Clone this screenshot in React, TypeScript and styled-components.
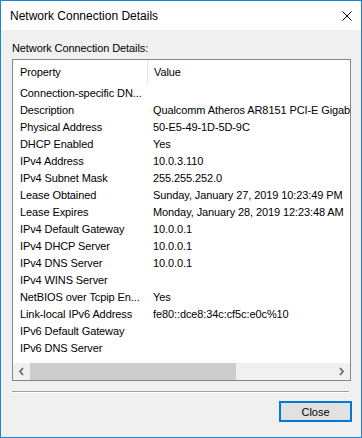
import styled, { createGlobalStyle } from "styled-components";

const GlobalStyle = createGlobalStyle`
  html, body {
    margin: 0;
    padding: 0;
    background: #ffffff;
  }
  * {
    box-sizing: border-box;
  }
`;

const Window = styled.div`
  width: 362px;
  height: 438px;
  border: 1px solid #1883d7;
  display: flex;
  flex-direction: column;
  font-family: "Liberation Sans", Arial, sans-serif;
  color: #000;
  overflow: hidden;
`;

const TitleBar = styled.div`
  height: 29px;
  background: #ffffff;
  display: flex;
  align-items: center;
  justify-content: space-between;
  padding: 0 9px 0 9px;
  font-size: 12px;
`;

const Client = styled.div`
  flex: 1;
  background: #f0f0f0;
  display: flex;
  flex-direction: column;
  padding: 12px 9px 0 11px;
  font-size: 11px;
  letter-spacing: -0.1px;
`;

const Label = styled.div`
  height: 13px;
  line-height: 13px;
  margin-bottom: 4px;
`;

const ListBox = styled.div`
  width: 339px;
  height: 322px;
  border: 1px solid #828790;
  background: #ffffff;
  display: flex;
  flex-direction: column;
  overflow: hidden;
`;

const Header = styled.div`
  height: 25px;
  display: flex;
  align-items: center;
  flex-shrink: 0;
`;

const HeaderCell = styled.div<{ $width?: number; $divider?: boolean }>`
  height: 25px;
  line-height: 25px;
  padding-left: ${(p) => (p.$divider ? 7 : 6)}px;
  width: ${(p) => (p.$width ? `${p.$width}px` : "auto")};
  border-right: ${(p) => (p.$divider ? "1px solid #e5e5e5" : "none")};
  white-space: nowrap;
`;

const Rows = styled.div`
  flex: 1;
  display: flex;
  flex-direction: column;
`;

const Row = styled.div`
  height: 17px;
  line-height: 17px;
  display: flex;
  white-space: nowrap;
`;

const NameCell = styled.div`
  width: 134px;
  flex-shrink: 0;
  padding-left: 7px;
  overflow: hidden;
`;

const ValueCell = styled.div`
  padding-left: 6px;
  flex: 1;
  overflow: hidden;
`;

const HScroll = styled.div`
  height: 17px;
  flex-shrink: 0;
  background: #f0f0f0;
  display: flex;
  align-items: stretch;
`;

const ArrowButton = styled.div`
  width: 17px;
  display: flex;
  align-items: center;
  justify-content: center;
`;

const Track = styled.div`
  flex: 1;
  display: flex;
  align-items: stretch;
`;

const Thumb = styled.div`
  width: 206px;
  background: #cdcdcd;
`;

const Separator = styled.div`
  margin-top: 10px;
  width: 337px;
  height: 2px;
  border-top: 1px solid #a0a0a0;
  border-bottom: 1px solid #ffffff;
`;

const Footer = styled.div`
  display: flex;
  justify-content: flex-end;
  margin-top: 8px;
`;

const Button = styled.button`
  width: 73px;
  height: 21px;
  border: 2px solid #0078d7;
  background: #e1e1e1;
  font-family: "Liberation Sans", Arial, sans-serif;
  font-size: 11px;
  color: #000;
  padding: 0;
`;

const rows: [string, string][] = [
  ["Connection-specific DN...", ""],
  ["Description", "Qualcomm Atheros AR8151 PCI-E Gigabit"],
  ["Physical Address", "50-E5-49-1D-5D-9C"],
  ["DHCP Enabled", "Yes"],
  ["IPv4 Address", "10.0.3.110"],
  ["IPv4 Subnet Mask", "255.255.252.0"],
  ["Lease Obtained", "Sunday, January 27, 2019 10:23:49 PM"],
  ["Lease Expires", "Monday, January 28, 2019 12:23:48 AM"],
  ["IPv4 Default Gateway", "10.0.0.1"],
  ["IPv4 DHCP Server", "10.0.0.1"],
  ["IPv4 DNS Server", "10.0.0.1"],
  ["IPv4 WINS Server", ""],
  ["NetBIOS over Tcpip En...", "Yes"],
  ["Link-local IPv6 Address", "fe80::dce8:34c:cf5c:e0c%10"],
  ["IPv6 Default Gateway", ""],
  ["IPv6 DNS Server", ""],
];

function CloseGlyph() {
  return (
    <svg width="10" height="10" viewBox="0 0 10 10">
      <path d="M0.5 0.5 L9.5 9.5 M9.5 0.5 L0.5 9.5" stroke="#000" strokeWidth="1" fill="none" />
    </svg>
  );
}

function Chevron({ dir }: { dir: "left" | "right" }) {
  const d = dir === "left" ? "M5 1 L2 4.5 L5 8" : "M2 1 L5 4.5 L2 8";
  return (
    <svg width="7" height="9" viewBox="0 0 7 9">
      <path d={d} stroke="#606060" strokeWidth="1.6" fill="none" />
    </svg>
  );
}

export default function App() {
  return (
    <>
      <GlobalStyle />
      <Window>
        <TitleBar>
          <span>Network Connection Details</span>
          <CloseGlyph />
        </TitleBar>
        <Client>
          <Label>Network Connection Details:</Label>
          <ListBox>
            <Header>
              <HeaderCell $width={135} $divider>
                Property
              </HeaderCell>
              <HeaderCell>Value</HeaderCell>
            </Header>
            <Rows>
              {rows.map(([name, value]) => (
                <Row key={name}>
                  <NameCell>{name}</NameCell>
                  <ValueCell>{value}</ValueCell>
                </Row>
              ))}
            </Rows>
            <HScroll>
              <ArrowButton>
                <Chevron dir="left" />
              </ArrowButton>
              <Track>
                <Thumb />
              </Track>
              <ArrowButton>
                <Chevron dir="right" />
              </ArrowButton>
            </HScroll>
          </ListBox>
          <Separator />
          <Footer>
            <Button>Close</Button>
          </Footer>
        </Client>
      </Window>
    </>
  );
}
